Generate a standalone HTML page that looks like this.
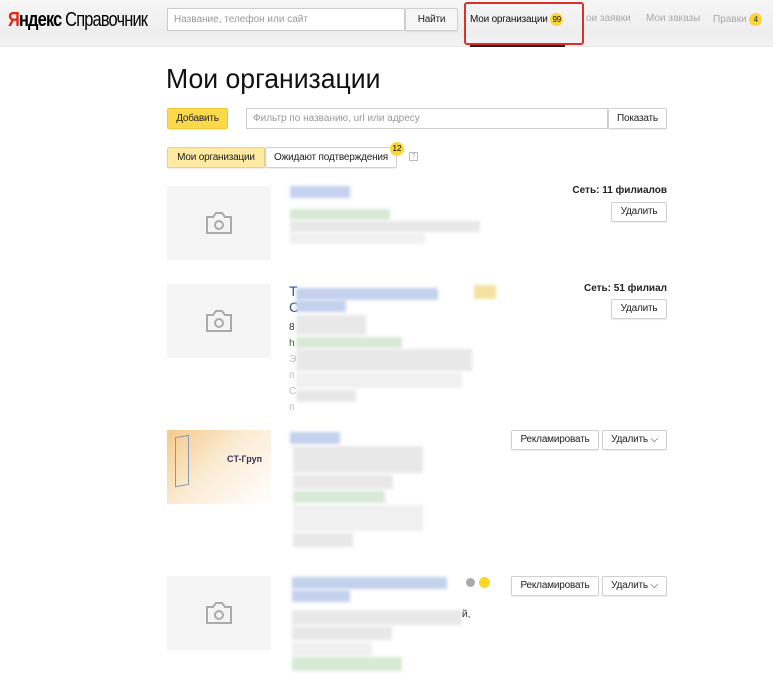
<!DOCTYPE html>
<html><head><meta charset="utf-8"><style>
*{margin:0;padding:0;box-sizing:border-box}
body{width:773px;height:673px;overflow:hidden;background:#fff;font-family:"Liberation Sans",sans-serif;position:relative;color:#000}
.a{position:absolute;white-space:nowrap}
.n{transform-origin:0 0;display:inline-block}
.hdr{position:absolute;left:0;top:0;width:773px;height:47px;background:linear-gradient(#f6f6f6,#eeeeee 70%,#f3f3f3);border-bottom:1px solid #e9e9e9}
.btn{position:absolute;border:1px solid #d0d0d0;border-radius:2px;background:#fff;font-size:10px;letter-spacing:-.2px;text-align:center;box-shadow:0 1px 1px rgba(0,0,0,.08);white-space:nowrap;color:#222}
.img{position:absolute;left:167px;width:104px;height:74px;background:#f5f5f5}
.cam{position:absolute;left:38px;top:25px}
.b{position:absolute;filter:blur(1.5px)}
.g{background:#e8e8e8}.gl{background:#f0f0f0}.bl{background:#c4d2ee}.gr{background:#d7ead6}
</style></head><body>
<div class="hdr"></div>
<div class="a" style="left:8px;top:9px;font-size:20px;letter-spacing:-1px"><span class="n" style="transform:scaleX(.82)"><span style="color:#e21;font-weight:bold">Я</span><b>ндекс</b> Справочник</span></div>
<div class="a" style="left:167px;top:8px;width:238px;height:23px;background:#fff;border:1px solid #ccc;font-size:10px;color:#999;padding:5px 6px">Название, телефон или сайт</div>
<div class="btn" style="left:405px;top:8px;width:53px;height:23px;line-height:21px;background:#f6f6f6">Найти</div>
<div class="a" style="left:464px;top:2px;width:120px;height:43px;border:2px solid #d9302b;border-radius:3px"></div>
<div class="a" style="left:470px;top:13px;font-size:10px;letter-spacing:-.2px;color:#111">Мои организации <span style="display:inline-block;background:#f9d73a;border-radius:50%;width:13px;height:13px;font-size:8px;line-height:13px;text-align:center">99</span></div>
<div class="a" style="left:470px;top:45px;width:95px;height:2px;background:#222"></div>
<div class="a" style="left:586px;top:13px;font-size:10px;color:#aaa">ои заявки</div>
<div class="a" style="left:646px;top:13px;font-size:10px;color:#aaa">Мои заказы</div>
<div class="a" style="left:713px;top:13px;font-size:10px;color:#aaa">Правки <span style="display:inline-block;background:#f9d73a;border-radius:50%;width:13px;height:13px;font-size:8px;line-height:13px;text-align:center;color:#333">4</span></div>

<div class="a" style="left:166px;top:63px;font-size:28px;color:#111"><span class="n" style="transform:scaleX(.95)">Мои организации</span></div>
<div class="btn" style="left:167px;top:108px;width:61px;height:21px;line-height:19px;background:#fcd94a;border-color:#f0c930">Добавить</div>
<div class="a" style="left:246px;top:108px;width:362px;height:21px;border:1px solid #ccc;font-size:10px;color:#999;padding:4px 6px">Фильтр по названию, url или адресу</div>
<div class="btn" style="left:608px;top:108px;width:59px;height:21px;line-height:19px">Показать</div>
<div class="btn" style="left:167px;top:147px;width:98px;height:21px;line-height:19px;background:#feeaa0;border-color:#e8d18a">Мои организации</div>
<div class="btn" style="left:265px;top:147px;width:132px;height:21px;line-height:19px">Ожидают подтверждения</div>
<div class="a" style="left:390px;top:142px;width:14px;height:14px;border-radius:50%;background:#f9d73a;font-size:8px;text-align:center;line-height:14px">12</div>
<div class="a" style="left:409px;top:152px;width:9px;height:9px;border:1px solid #bbb;font-size:7px;color:#aaa;text-align:center;line-height:7px">?</div>

<!-- card 1 -->
<div class="img" style="top:186px"><svg class="cam" width="28" height="24" viewBox="0 0 28 24"><path d="M2 6h6l3-4h6l3 4h6v16H2z" fill="none" stroke="#aaa" stroke-width="2"/><circle cx="14" cy="14" r="4" fill="none" stroke="#aaa" stroke-width="2"/></svg></div>
<div class="b bl" style="left:290px;top:186px;width:60px;height:12px"></div>
<div class="b gr" style="left:290px;top:209px;width:100px;height:11px"></div>
<div class="b g" style="left:290px;top:221px;width:190px;height:11px"></div>
<div class="b gl" style="left:290px;top:233px;width:135px;height:11px"></div>
<div class="a" style="right:106px;top:185px;font-size:10px;font-weight:bold;color:#222">Сеть: 11 филиалов</div>
<div class="btn" style="left:611px;top:202px;width:56px;height:20px;line-height:18px">Удалить</div>

<!-- card 2 -->
<div class="img" style="top:284px"><svg class="cam" width="28" height="24" viewBox="0 0 28 24"><path d="M2 6h6l3-4h6l3 4h6v16H2z" fill="none" stroke="#aaa" stroke-width="2"/><circle cx="14" cy="14" r="4" fill="none" stroke="#aaa" stroke-width="2"/></svg></div>
<div class="a" style="left:289px;top:283px;font-size:14px;color:#2a4f8f">Т<br>С</div>
<div class="b bl" style="left:296px;top:288px;width:142px;height:12px"></div>
<div class="b bl" style="left:296px;top:300px;width:50px;height:12px"></div>
<div class="b g" style="left:296px;top:315px;width:70px;height:20px"></div>
<div class="b gr" style="left:296px;top:337px;width:106px;height:11px"></div>
<div class="b g" style="left:296px;top:349px;width:176px;height:22px"></div>
<div class="b gl" style="left:296px;top:373px;width:166px;height:15px"></div>
<div class="b g" style="left:296px;top:390px;width:60px;height:12px"></div>
<div class="a" style="left:289px;top:320px;font-size:10px;line-height:16px;color:#bbb"><span style="color:#333">8</span><br><span style="color:#363">h</span><br>Э<br>п<br>С<br>п</div>
<div class="a" style="left:474px;top:285px;width:22px;height:14px;background:#f5e2a0;filter:blur(1.5px)"></div>
<div class="a" style="right:106px;top:283px;font-size:10px;font-weight:bold;color:#222">Сеть: 51 филиал</div>
<div class="btn" style="left:611px;top:299px;width:56px;height:20px;line-height:18px">Удалить</div>

<!-- card 3 -->
<div class="img" style="top:430px;background:linear-gradient(135deg,#f6c98a,#fbebd3 45%,#fff)"><div class="a" style="left:60px;top:24px;font-size:9px;font-weight:bold;color:#335">CT-Груп</div><div class="a" style="left:8px;top:6px;width:14px;height:50px;border:1px solid #8899aa;transform:skewY(-10deg)"></div></div>
<div class="b bl" style="left:290px;top:432px;width:50px;height:12px"></div>
<div class="b g" style="left:293px;top:446px;width:130px;height:27px"></div>
<div class="b g" style="left:293px;top:475px;width:100px;height:14px"></div>
<div class="b gr" style="left:293px;top:491px;width:92px;height:12px"></div>
<div class="b gl" style="left:293px;top:505px;width:130px;height:26px"></div>
<div class="b g" style="left:293px;top:533px;width:60px;height:14px"></div>
<div class="btn" style="left:511px;top:430px;width:88px;height:20px;line-height:18px">Рекламировать</div>
<div class="btn" style="left:602px;top:430px;width:65px;height:20px;line-height:18px">Удалить ⌵</div>

<!-- card 4 -->
<div class="img" style="top:576px"><svg class="cam" width="28" height="24" viewBox="0 0 28 24"><path d="M2 6h6l3-4h6l3 4h6v16H2z" fill="none" stroke="#aaa" stroke-width="2"/><circle cx="14" cy="14" r="4" fill="none" stroke="#aaa" stroke-width="2"/></svg></div>
<div class="b bl" style="left:292px;top:577px;width:155px;height:12px"></div>
<div class="b bl" style="left:292px;top:590px;width:58px;height:12px"></div>
<div class="b g" style="left:292px;top:610px;width:170px;height:15px"></div>
<div class="a" style="left:462px;top:609px;font-size:10px;color:#333">й,</div>
<div class="b g" style="left:292px;top:626px;width:100px;height:14px"></div>
<div class="b gl" style="left:292px;top:642px;width:80px;height:14px"></div>
<div class="b gr" style="left:292px;top:657px;width:110px;height:14px"></div>
<div class="a" style="left:466px;top:578px;width:9px;height:9px;border-radius:50%;background:#aaa"></div>
<div class="a" style="left:479px;top:577px;width:11px;height:11px;border-radius:50%;background:#fbd623"></div>
<div class="btn" style="left:511px;top:576px;width:88px;height:20px;line-height:18px">Рекламировать</div>
<div class="btn" style="left:602px;top:576px;width:65px;height:20px;line-height:18px">Удалить ⌵</div>
</body></html>
